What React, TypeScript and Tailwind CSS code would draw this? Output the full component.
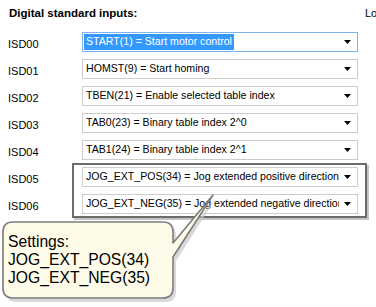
const rows = [
  { id: "ISD00", text: "START(1) = Start motor control", active: true },
  { id: "ISD01", text: "HOMST(9) = Start homing" },
  { id: "ISD02", text: "TBEN(21) = Enable selected table index" },
  { id: "ISD03", text: "TAB0(23) = Binary table index 2^0" },
  { id: "ISD04", text: "TAB1(24) = Binary table index 2^1" },
  { id: "ISD05", text: "JOG_EXT_POS(34) = Jog extended positive direction" },
  { id: "ISD06", text: "JOG_EXT_NEG(35) = Jog extended negative direction" },
];

function Arrow() {
  return (
    <svg width="7" height="4" viewBox="0 0 7 4" className="shrink-0">
      <path d="M0 0H7L3.5 4Z" fill="#000" />
    </svg>
  );
}

export default function App() {
  return (
    <div className="relative w-[376px] h-[307px] overflow-hidden bg-white text-black font-['Liberation_Sans',Arial,sans-serif]">
      {/* Header */}
      <div className="flex pt-[6px] overflow-hidden whitespace-nowrap">
        <div className="w-[365px] shrink-0 pl-[9px] text-[11.5px] leading-[14px] font-bold">Digital standard inputs:</div>
        <div className="text-[11px] leading-[14px]">Lo</div>
      </div>

      {/* Rows */}
      <div className="mt-[12px] flex flex-col">
        {rows.map(r => (
          <div key={r.id} className="flex h-[27px]">
            <div className="w-[82px] shrink-0 pl-[8px] pt-[6px] text-[11px] leading-[13px]">{r.id}</div>
            <div className={`w-[276px] h-[20px] flex items-center border bg-white ${r.active ? "border-[#7eb4ea]" : "border-[#cdcdcd]"}`}>
              <div className="flex-1 min-w-0 overflow-hidden whitespace-nowrap pl-[1px] text-[10.6px]">
                {r.active
                  ? <span className="inline-flex items-center h-[16px] px-[2px] bg-[#3399ff] text-white">{r.text}</span>
                  : <span className="pl-[2px]">{r.text}</span>}
              </div>
              <div className="w-[18px] shrink-0 flex justify-center pr-[1px]"><Arrow /></div>
            </div>
          </div>
        ))}
      </div>

      {/* Highlight frame */}
      <div className="absolute left-[72px] top-[163px] w-[295px] h-[55px] border-2 border-[#6b6b6b] shadow-[2px_2px_0_#c4c4c4]" />

      {/* Callout */}
      <svg className="absolute left-0 top-0 pointer-events-none" width="376" height="307" viewBox="0 0 376 307">
        <path
          d="M15 225H165Q176 225 176 236V246L216 198L176 261V291Q176 302 165 302H15Q6 302 6 291V236Q6 225 15 225Z"
          fill="#c9c9c9" opacity="0.7"
        />
        <path
          d="M13 222H163Q173 222 173 232V243L213 195L173 257V288Q173 298 163 298H13Q3 298 3 288V232Q3 222 13 222Z"
          fill="#fffbe9" stroke="#7c7c7c" strokeWidth="1.6" strokeLinejoin="round"
        />
      </svg>
      <div className="absolute left-[8px] top-[233px] text-[15.7px] leading-[18px]">
        <div>Settings:</div>
        <div>JOG_EXT_POS(34)</div>
        <div>JOG_EXT_NEG(35)</div>
      </div>
    </div>
  );
}
